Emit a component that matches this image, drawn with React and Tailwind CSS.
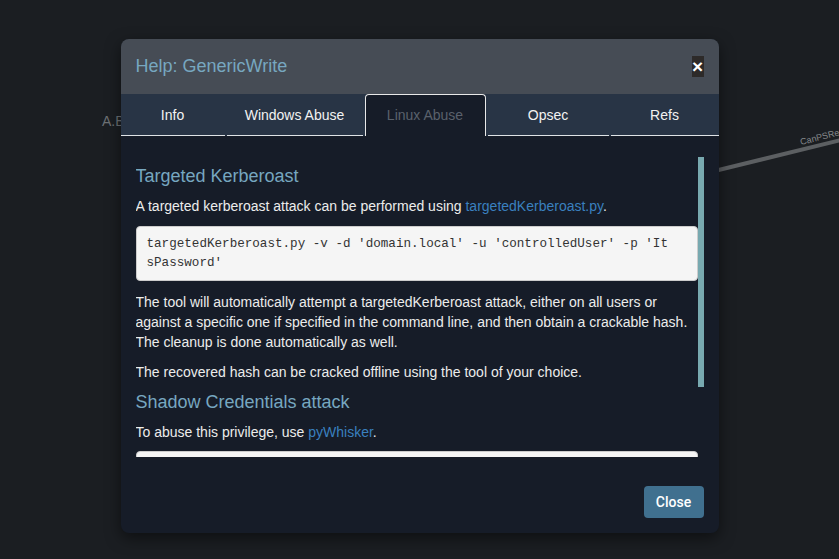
import React from "react";

const font = { fontFamily: '"Liberation Sans", Arial, sans-serif' };
const mono = { fontFamily: '"Liberation Mono", "DejaVu Sans Mono", monospace' };

function Tab({ label, active, className }) {
  if (active) {
    return (
      <div className={`flex items-center justify-center border border-b-0 border-[#e8e8e8] rounded-t-[4px] bg-[#161c28] text-[#5a616c] text-[14px] ${className}`}>
        {label}
      </div>
    );
  }
  return (
    <div className={`flex items-center justify-center border-b border-[#dfe3e6] pt-[1px] text-[#f2f2f2] text-[14px] ${className}`}>
      {label}
    </div>
  );
}

export default function App() {
  return (
    <div className="relative w-[839px] h-[559px] overflow-hidden bg-[#1b1e22]" style={font}>
      {/* graph canvas behind the modal */}
      <div className="absolute left-[102px] top-[111px] text-[14px] text-[#6d7175]">A.B</div>
      <svg className="absolute left-0 top-0" width="839" height="559">
        <line x1="690" y1="177" x2="845" y2="139" stroke="#5c5f62" strokeWidth="4" />
        <text x="801" y="145" fontSize="9" fill="#85888b" transform="rotate(-14 801 145)" style={font}>CanPSRe</text>
      </svg>

      <div className="relative flex justify-center pt-[39px]">
        <div className="w-[598px] rounded-[8px] overflow-hidden bg-[#161c28] shadow-[0_5px_15px_rgba(0,0,0,0.5)]">
          {/* header */}
          <div className="h-[55px] bg-[#464c55] flex items-center justify-between px-[15px]">
            <div className="text-[18px] text-[#77a7c0]">Help: GenericWrite</div>
            <div className="w-[12px] h-[21px] bg-[#2d2a29] flex items-center justify-center text-white font-bold text-[19px] leading-none">×</div>
          </div>

          {/* tabs */}
          <div className="h-[42px] bg-[#283445] flex gap-[2px]">
            <Tab label="Info" className="w-[104px]" />
            <Tab label="Windows Abuse" className="w-[136px]" />
            <Tab label="Linux Abuse" active className="w-[121px]" />
            <Tab label="Opsec" className="w-[121px]" />
            <Tab label="Refs" className="flex-1" />
          </div>

          {/* body */}
          <div className="px-[15px] pt-[21px] pb-[14px]">
            <div className="relative h-[300px] overflow-hidden pr-[6px]">
              <div className="text-[14px] leading-[20px] text-[#ececec]">
                <h4 className="text-[18px] leading-[20px] text-[#77a7c0] mt-[9px] mb-[10px]">Targeted Kerberoast</h4>
                <p className="mb-[10px]">
                  A targeted kerberoast attack can be performed using <span className="text-[#3a80bf]">targetedKerberoast.py</span>.
                </p>
                <pre
                  className="mb-[11px] bg-[#f5f5f5] border border-[#cccccc] rounded-[4px] pl-[10px] pr-[10px] pt-[8px] pb-[7px] text-[#333333] text-[12.6px] leading-[19px] whitespace-pre-wrap"
                  style={mono}
                >
                  {"targetedKerberoast.py -v -d 'domain.local' -u 'controlledUser' -p 'It\nsPassword'"}
                </pre>
                <p className="mb-[10px]">
                  The tool will automatically attempt a targetedKerberoast attack, either on all users or against a specific one if specified in the command line, and then obtain a crackable hash. The cleanup is done automatically as well.
                </p>
                <p className="mb-[10px]">The recovered hash can be cracked offline using the tool of your choice.</p>
                <h4 className="text-[18px] leading-[20px] text-[#77a7c0] mt-[9px] mb-[10px]">Shadow Credentials attack</h4>
                <p className="mb-[9px]">
                  To abuse this privilege, use <span className="text-[#3a80bf]">pyWhisker</span>.
                </p>
                <pre
                  className="mb-[10px] bg-[#f5f5f5] border border-[#cccccc] rounded-[4px] px-[10px] py-[8px] text-[#333333] text-[12.6px] leading-[19px] whitespace-pre-wrap break-all"
                  style={mono}
                >
                  pywhisker.py -d "domain.local" -u "controlledAccount"
                </pre>
              </div>
              <div className="absolute right-0 top-0 w-[6px] h-[230px] bg-[#78a9b0]" />
            </div>
          </div>

          {/* footer */}
          <div className="flex justify-end px-[15px] pt-[15px] pb-[15px]">
            <div
              className="h-[32px] w-[60px] rounded-[4px] bg-[#40708f] text-white text-[14px] font-medium flex items-center justify-center"
              style={{ fontFamily: 'Roboto, "Liberation Sans", sans-serif' }}
            >
              Close
            </div>
          </div>
        </div>
      </div>
    </div>
  );
}
